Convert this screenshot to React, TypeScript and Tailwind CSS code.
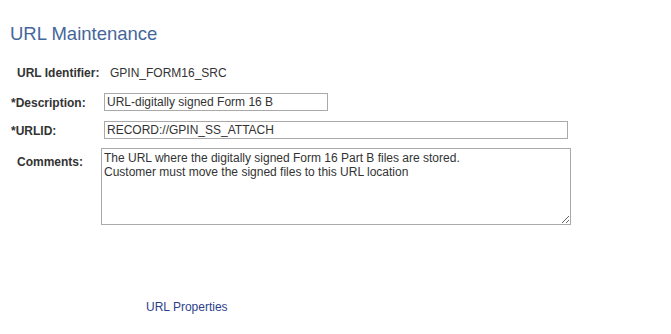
import React from 'react'

const LABEL = 'text-[12px] font-bold text-[#333333] leading-[18px]'

export default function App() {
  return (
    <div className="w-[671px] h-[334px] bg-white font-['Liberation_Sans',Arial,sans-serif] text-[#333333] overflow-hidden">
      {/* Title */}
      <h1 className="pt-[23px] pl-[10px] text-[18.5px] leading-[21px] text-[#44679b]">URL Maintenance</h1>

      <div className="mt-[20px] flex flex-col">
        {/* URL Identifier */}
        <div className="flex h-[18px] items-center">
          <span className={`${LABEL} pl-[17px] w-[110px] shrink-0`}>URL Identifier:</span>
          <span className="text-[12px] leading-[18px]">GPIN_FORM16_SRC</span>
        </div>

        {/* Description */}
        <div className="mt-[11px] flex h-[18px] items-center">
          <span className={`${LABEL} pl-[11px] w-[104px] shrink-0 pt-[2px]`}>*Description:</span>
          <input
            readOnly
            value="URL-digitally signed Form 16 B"
            className="w-[224px] h-[18px] border border-[#a9a9a9] px-[2px] text-[12px] text-[#333333] outline-none"
          />
        </div>

        {/* URLID */}
        <div className="mt-[10px] flex h-[18px] items-center">
          <span className={`${LABEL} pl-[11px] w-[104px] shrink-0 pt-[2px]`}>*URLID:</span>
          <input
            readOnly
            value="RECORD://GPIN_SS_ATTACH"
            className="w-[464px] h-[18px] border border-[#a9a9a9] px-[2px] text-[12px] text-[#333333] outline-none"
          />
        </div>

        {/* Comments */}
        <div className="mt-[9px] flex">
          <span className={`${LABEL} pl-[17px] w-[101px] shrink-0 pt-[5px]`}>Comments:</span>
          <textarea
            readOnly
            value={'The URL where the digitally signed Form 16 Part B files are stored.\nCustomer must move the signed files to this URL location'}
            className="w-[470px] h-[77px] border border-[#a9a9a9] px-[2px] pt-[2px] text-[12px] leading-[14px] text-[#333333] outline-none resize"
          />
        </div>
      </div>

      {/* Link */}
      <div className="mt-[69px] pl-[146px]">
        <a className="text-[12px] leading-[16px] text-[#2d3f8c] cursor-pointer">URL Properties</a>
      </div>
    </div>
  )
}
